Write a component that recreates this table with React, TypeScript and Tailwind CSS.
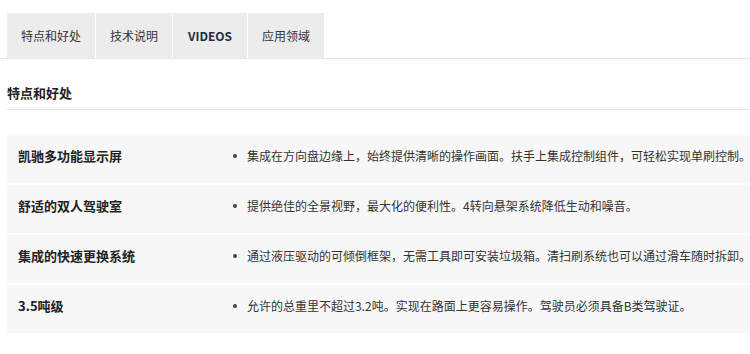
const tabs = ["特点和好处", "技术说明", "VIDEOS", "应用领域"];

const rows = [
  {
    label: "凯驰多功能显示屏",
    text: "集成在方向盘边缘上，始终提供清晰的操作画面。扶手上集成控制组件，可轻松实现单刷控制。",
  },
  {
    label: "舒适的双人驾驶室",
    text: "提供绝佳的全景视野，最大化的便利性。4转向悬架系统降低生动和噪音。",
  },
  {
    label: "集成的快速更换系统",
    text: "通过液压驱动的可倾倒框架，无需工具即可安装垃圾箱。清扫刷系统也可以通过滑车随时拆卸。",
  },
  {
    label: "3.5吨级",
    text: "允许的总重里不超过3.2吨。实现在路面上更容易操作。驾驶员必须具备B类驾驶证。",
  },
];

export default function App() {
  return (
    <div className="h-[354px] w-[750px] overflow-hidden bg-white font-['Noto_Sans_CJK_SC','Noto_Sans',sans-serif] text-[#333]">
      <div className="mt-[13px] border-b border-[#e8e8e8]">
        <div className="ml-[7px] flex gap-px">
          {tabs.map((t) => (
            <div
              key={t}
              className={`flex h-[45px] items-center bg-[#ececec] px-[14px] text-[12px] ${
                t === "VIDEOS" ? "px-[15px] font-semibold text-[#1f2a44]" : "text-[#333]"
              }`}
            >
              {t}
            </div>
          ))}
        </div>
      </div>

      <div className="ml-[7px] border-b border-[#e3e3e3] pt-[26px] pb-[8px]">
        <h2 className="text-[13px] leading-[16px] font-bold text-[#222]">特点和好处</h2>
      </div>

      <div className="ml-[7px] mt-[25px] flex flex-col gap-[2px]">
        {rows.map((r) => (
          <div key={r.label} className="flex h-[48px] bg-[#f7f7f7] pt-[13px]">
            <div className="w-[222px] shrink-0 pl-[11px] text-[13px] leading-[16px] font-bold text-[#222]">
              {r.label}
            </div>
            <div className="flex items-start whitespace-nowrap text-[12px] leading-[16px] text-[#333]">
              <span className="mt-[6px] ml-[4px] mr-[10px] h-[4px] w-[4px] shrink-0 rounded-full bg-[#444]" />
              <span>{r.text}</span>
            </div>
          </div>
        ))}
      </div>
    </div>
  );
}
